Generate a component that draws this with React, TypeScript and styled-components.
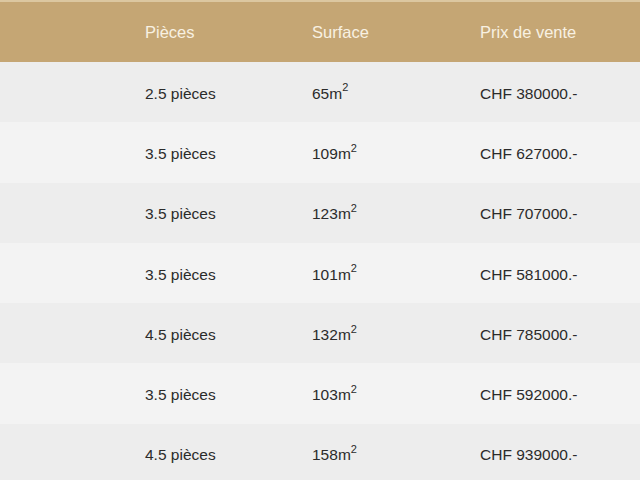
import React from 'react';
import styled, { createGlobalStyle } from 'styled-components';

const GlobalStyle = createGlobalStyle`
  html, body {
    margin: 0;
    padding: 0;
    background: #f1f1f1;
    font-family: "Liberation Sans", Arial, sans-serif;
  }
`;

const Table = styled.div`
  width: 640px;
  height: 480px;
  overflow: hidden;
  display: flex;
  flex-direction: column;
`;

const HeaderRow = styled.div`
  display: grid;
  grid-template-columns: 167px 168px 1fr;
  align-items: center;
  height: 60px;
  flex-shrink: 0;
  padding-left: 145px;
  background: #c5a674;
  border-top: 2px solid #dcc7a0;
  color: #f8f1e2;
  font-size: 16.5px;
`;

const Row = styled.div<{ $alt: boolean }>`
  display: grid;
  grid-template-columns: 167px 168px 1fr;
  align-items: center;
  box-sizing: border-box;
  height: 60.3px;
  flex-shrink: 0;
  padding: 3px 0 0 145px;
  background: ${(p) => (p.$alt ? '#f3f3f3' : '#ededed')};
  color: #2b2b2b;
  font-size: 15.5px;
`;

const Cell = styled.div`
  white-space: nowrap;
`;

const Sup = styled.sup`
  font-size: 11px;
  line-height: 0;
  position: relative;
  top: -1px;
`;

const rows = [
  { pieces: '2.5 pièces', surface: 65, prix: '380000' },
  { pieces: '3.5 pièces', surface: 109, prix: '627000' },
  { pieces: '3.5 pièces', surface: 123, prix: '707000' },
  { pieces: '3.5 pièces', surface: 101, prix: '581000' },
  { pieces: '4.5 pièces', surface: 132, prix: '785000' },
  { pieces: '3.5 pièces', surface: 103, prix: '592000' },
  { pieces: '4.5 pièces', surface: 158, prix: '939000' },
];

export default function App() {
  return (
    <>
      <GlobalStyle />
      <Table>
        <HeaderRow>
          <Cell>Pièces</Cell>
          <Cell>Surface</Cell>
          <Cell>Prix de vente</Cell>
        </HeaderRow>
        {rows.map((r, i) => (
          <Row key={i} $alt={i % 2 === 1}>
            <Cell>{r.pieces}</Cell>
            <Cell>
              {r.surface}m<Sup>2</Sup>
            </Cell>
            <Cell>CHF {r.prix}.-</Cell>
          </Row>
        ))}
      </Table>
    </>
  );
}
